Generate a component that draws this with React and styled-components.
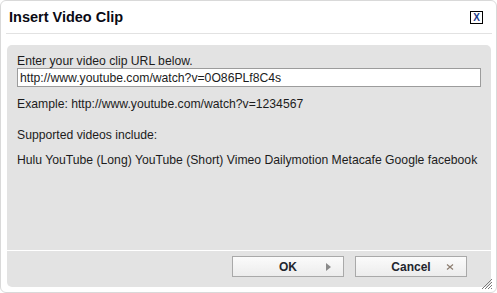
import React from 'react'
import styled, { createGlobalStyle } from 'styled-components'

const GlobalStyle = createGlobalStyle`
  html, body {
    margin: 0;
    padding: 0;
    background: #ffffff;
  }
  body {
    font-family: "Liberation Sans", Arial, sans-serif;
    font-size: 12.2px;
    color: #1c1c1c;
  }
`

const Dialog = styled.div`
  box-sizing: border-box;
  width: 497px;
  height: 293px;
  border: 1px solid #d9d9d9;
  border-radius: 6px;
  background: #ffffff;
  display: flex;
  flex-direction: column;
  position: relative;
`

const Header = styled.div`
  height: 32px;
  margin: 0 4px 0 5px;
  padding: 0 9px 0 3px;
  border-bottom: 1px solid #e2e2e2;
  display: flex;
  align-items: center;
  justify-content: space-between;
`

const Title = styled.h1`
  margin: 0;
  font-size: 14.5px;
  font-weight: bold;
  color: #0a0a14;
`

const Close = styled.span`
  box-sizing: border-box;
  width: 13px;
  height: 13px;
  border: 1px solid #000;
  display: flex;
  align-items: center;
  justify-content: center;
  font-size: 10px;
  font-weight: bold;
  line-height: 1;
  color: #1a3a8a;
  margin-top: 1px;
`

const Panel = styled.div`
  flex: 1;
  margin: 11px 5px 5px 6px;
  background: #e3e3e3;
  border-radius: 5px;
  display: flex;
  flex-direction: column;
`

const Body = styled.div`
  flex: 1;
  padding: 9px 10px 0 10px;
`

const Line = styled.p`
  margin: ${p => p.$gap || 0}px 0 0 0;
  line-height: 14px;
  white-space: nowrap;
`

const UrlInput = styled.input`
  box-sizing: border-box;
  display: block;
  width: 464px;
  height: 19px;
  margin: 0;
  padding: 0 2px;
  border: 1px solid #9c9c9c;
  background: #ffffff;
  font-family: "Liberation Sans", Arial, sans-serif;
  font-size: 12.2px;
  color: #1c1c1c;
  outline: none;
`

const Footer = styled.div`
  height: 31px;
  border-top: 1px solid #ffffff;
  display: flex;
  justify-content: flex-end;
  align-items: flex-start;
  gap: 11px;
  padding: 5px 24px 0 0;
`

const Button = styled.button`
  box-sizing: border-box;
  width: 112px;
  height: 21px;
  border: 1px solid #a9a9a9;
  background: linear-gradient(#fbfbfb, #ececec);
  position: relative;
  padding: 0;
  font-family: "Liberation Sans", Arial, sans-serif;
  font-size: 12px;
  font-weight: bold;
  color: #22252e;
  display: flex;
  align-items: center;
  justify-content: center;
`

const ButtonIcon = styled.span`
  position: absolute;
  right: ${p => p.$right}px;
  top: 50%;
  transform: translateY(-50%);
  display: flex;
`

const Grip = styled.svg`
  position: absolute;
  right: 3px;
  bottom: 2px;
`

export default function App() {
  return (
    <>
      <GlobalStyle />
      <Dialog>
        <Header>
          <Title>Insert Video Clip</Title>
          <Close>X</Close>
        </Header>
        <Panel>
          <Body>
            <Line>Enter your video clip URL below.</Line>
            <UrlInput defaultValue="http://www.youtube.com/watch?v=0O86PLf8C4s" />
            <Line $gap={10}>Example: http://www.youtube.com/watch?v=1234567</Line>
            <Line $gap={17}>Supported videos include:</Line>
            <Line $gap={11}>Hulu YouTube (Long) YouTube (Short) Vimeo Dailymotion Metacafe Google facebook</Line>
          </Body>
          <Footer>
            <Button>
              OK
              <ButtonIcon $right={12}>
                <svg width="5" height="8" viewBox="0 0 5 8">
                  <path d="M0 0 L5 4 L0 8 Z" fill="#8a8a8a" />
                </svg>
              </ButtonIcon>
            </Button>
            <Button>
              Cancel
              <ButtonIcon $right={12}>
                <svg width="8" height="7" viewBox="0 0 8 7">
                  <path d="M1 1 L7 6 M7 1 L1 6" stroke="#8c7d70" strokeWidth="1.2" />
                </svg>
              </ButtonIcon>
            </Button>
          </Footer>
        </Panel>
        <Grip width="14" height="14" viewBox="0 0 14 14">
          <path d="M13 3 L3 13 M13 6 L6 13 M13 9 L9 13 M13 12 L12 13" stroke="#7a7a7a" strokeWidth="1" />
        </Grip>
      </Dialog>
    </>
  )
}
